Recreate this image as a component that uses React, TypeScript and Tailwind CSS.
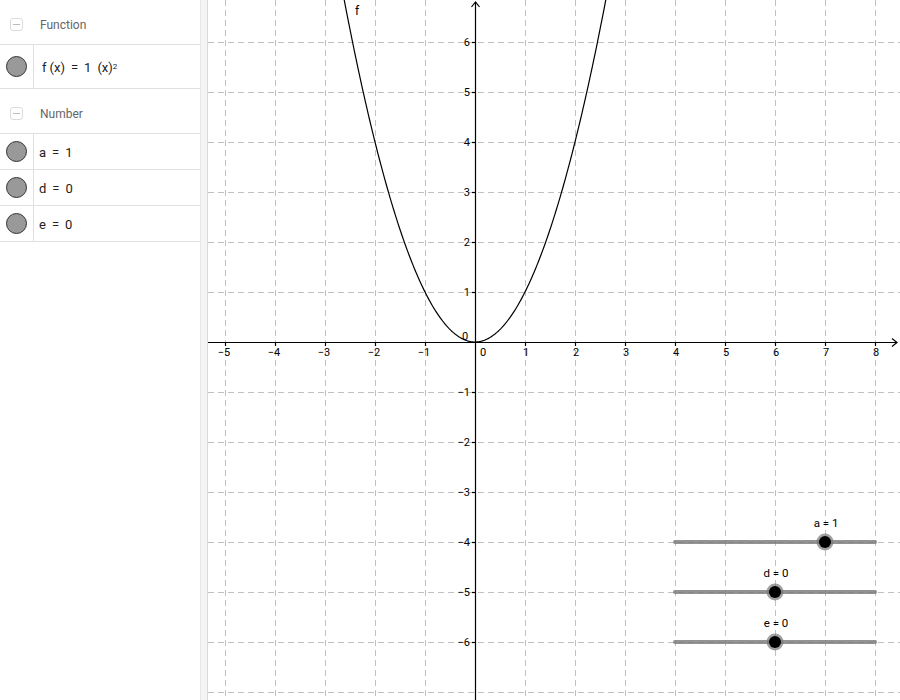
import React from "react";

const OX = 475;
const OY = 342;
const U = 50;

function parabola() {
  const pts: string[] = [];
  for (let i = 0; i <= 200; i++) {
    const x = -2.7 + (5.4 * i) / 200;
    const px = OX + x * U;
    const py = OY - x * x * U;
    pts.push(`${i === 0 ? "M" : "L"}${px.toFixed(2)},${py.toFixed(2)}`);
  }
  return pts.join(" ");
}

function MinusBox() {
  return (
    <div className="w-[13px] h-[13px] rounded-[3px] border border-[#dcdcdc] flex items-center justify-center">
      <div className="w-[7px] h-[1px] bg-[#bdbdbd]" />
    </div>
  );
}

function Ball() {
  return <div className="w-[21px] h-[21px] rounded-full bg-[#999999] border border-[#333333]" />;
}

function Header({ label, h }: { label: string; h: string }) {
  return (
    <div className={`flex items-center pt-[5px] border-b border-[#e0e0e0] ${h}`}>
      <div className="w-[40px] pl-[10px] flex items-center">
        <MinusBox />
      </div>
      <span className="text-[12px] text-[#666666]" style={{ fontFamily: "Roboto, sans-serif" }}>
        {label}
      </span>
    </div>
  );
}

function Row({ children, h }: { children: React.ReactNode; h: string }) {
  return (
    <div className={`flex border-b border-[#e0e0e0] ${h}`}>
      <div className="w-[34px] border-r border-[#e0e0e0] flex items-center justify-center">
        <Ball />
      </div>
      <div
        className="flex items-center pl-[5px] pt-[2px] text-[13px] text-[#222222]"
        style={{ fontFamily: "Roboto, sans-serif" }}
      >
        {children}
      </div>
    </div>
  );
}

function Graph() {
  const vx: number[] = [];
  for (let x = 225; x <= 875; x += 50) if (x !== OX) vx.push(x);
  const hy: number[] = [];
  for (let y = 42; y <= 692; y += 50) if (y !== OY) hy.push(y);
  const xl: number[] = [];
  for (let k = -5; k <= 8; k++) if (k !== 0) xl.push(k);
  const yl: number[] = [];
  for (let k = 6; k >= -6; k--) if (k !== 0) yl.push(k);
  const fmt = (n: number) => (n < 0 ? `\u2212${-n}` : `${n}`);
  const font = "Roboto, sans-serif";
  return (
    <svg width="692" height="700" viewBox="208 0 692 700" className="block">
      <g stroke="#c0c0c0" strokeWidth="1" strokeDasharray="6 4">
        {vx.map((x) => (
          <line key={`v${x}`} x1={x + 0.5} y1={0} x2={x + 0.5} y2={700} />
        ))}
        {hy.map((y) => (
          <line key={`h${y}`} x1={208} y1={y + 0.5} x2={900} y2={y + 0.5} />
        ))}
      </g>
      <g stroke="#000" strokeWidth="1.2" fill="none">
        <line x1={208} y1={OY + 0.5} x2={897} y2={OY + 0.5} />
        <line x1={OX + 0.5} y1={700} x2={OX + 0.5} y2={2} />
        <polyline points={`${OX - 3.5},${7} ${OX + 0.5},${2} ${OX + 4.5},${7}`} />
        <polyline points={`${892},${OY - 3.5} ${897},${OY + 0.5} ${892},${OY + 4.5}`} />
        {xl.map((k) => (
          <line key={`tx${k}`} x1={OX + k * U + 0.5} y1={OY} x2={OX + k * U + 0.5} y2={OY + 4} />
        ))}
        {yl.map((k) => (
          <line key={`ty${k}`} x1={OX - 3} y1={OY - k * U + 0.5} x2={OX} y2={OY - k * U + 0.5} />
        ))}
      </g>
      <g fontFamily={font} fontSize="11" fill="#000">
        {xl.map((k) => (
          <text key={`lx${k}`} x={OX + k * U + (k < 0 ? -1 : 1)} y={356} textAnchor="middle">
            {fmt(k)}
          </text>
        ))}
        {yl.map((k) => (
          <text key={`ly${k}`} x={OX - 5} y={OY - k * U + 4} textAnchor="end">
            {fmt(k)}
          </text>
        ))}
        <text x={483} y={356} textAnchor="middle">0</text>
        <text x={465} y={340} textAnchor="middle">0</text>
      </g>
      <path d={parabola()} stroke="#000" strokeWidth="1.2" fill="none" />
      <text x={357} y={15} fontFamily={font} fontSize="12" textAnchor="middle" fill="#000">
        f
      </text>
      {[
        { y: 542, v: 825, label: "a = 1" },
        { y: 592, v: 775, label: "d = 0" },
        { y: 642, v: 775, label: "e = 0" },
      ].map((s) => (
        <g key={s.label}>
          <line x1={675} y1={s.y} x2={875} y2={s.y} stroke="#777" strokeOpacity="0.8" strokeWidth="4" strokeLinecap="round" />
          <circle cx={s.v} cy={s.y} r={8.5} fill="#777" fillOpacity="0.7" />
          <circle cx={s.v} cy={s.y} r={6} fill="#000" />
          <text x={s.v + 1} y={s.y - 15} fontFamily={font} fontSize="11.5" textAnchor="middle" fill="#000">
            {s.label}
          </text>
        </g>
      ))}
    </svg>
  );
}

export default function App() {
  return (
    <div className="w-[900px] h-[700px] flex bg-white overflow-hidden">
      <div className="w-[200px] h-full flex flex-col bg-white">
        <Header label="Function" h="h-[45px]" />
        <Row h="h-[44px]">
          <span className="pl-[3px]">
            f<span className="ml-[3px]">(x)</span>
            <span className="mx-[6px]">=</span>1
            <span className="ml-[6px]">(x)</span>
            <sup className="text-[8px] relative -top-[3px]">2</sup>
          </span>
        </Row>
        <Header label="Number" h="h-[45px]" />
        <Row h="h-[36px]">
          a<span className="mx-[6px]">=</span>1
        </Row>
        <Row h="h-[36px]">
          d<span className="mx-[6px]">=</span>0
        </Row>
        <Row h="h-[36px]">
          e<span className="mx-[6px]">=</span>0
        </Row>
      </div>
      <div className="w-[8px] h-full bg-[#f4f4f4] border-l border-[#e6e6e6] border-r border-r-[#d9d9d9]" />
      <div className="flex-1 h-full">
        <Graph />
      </div>
    </div>
  );
}
